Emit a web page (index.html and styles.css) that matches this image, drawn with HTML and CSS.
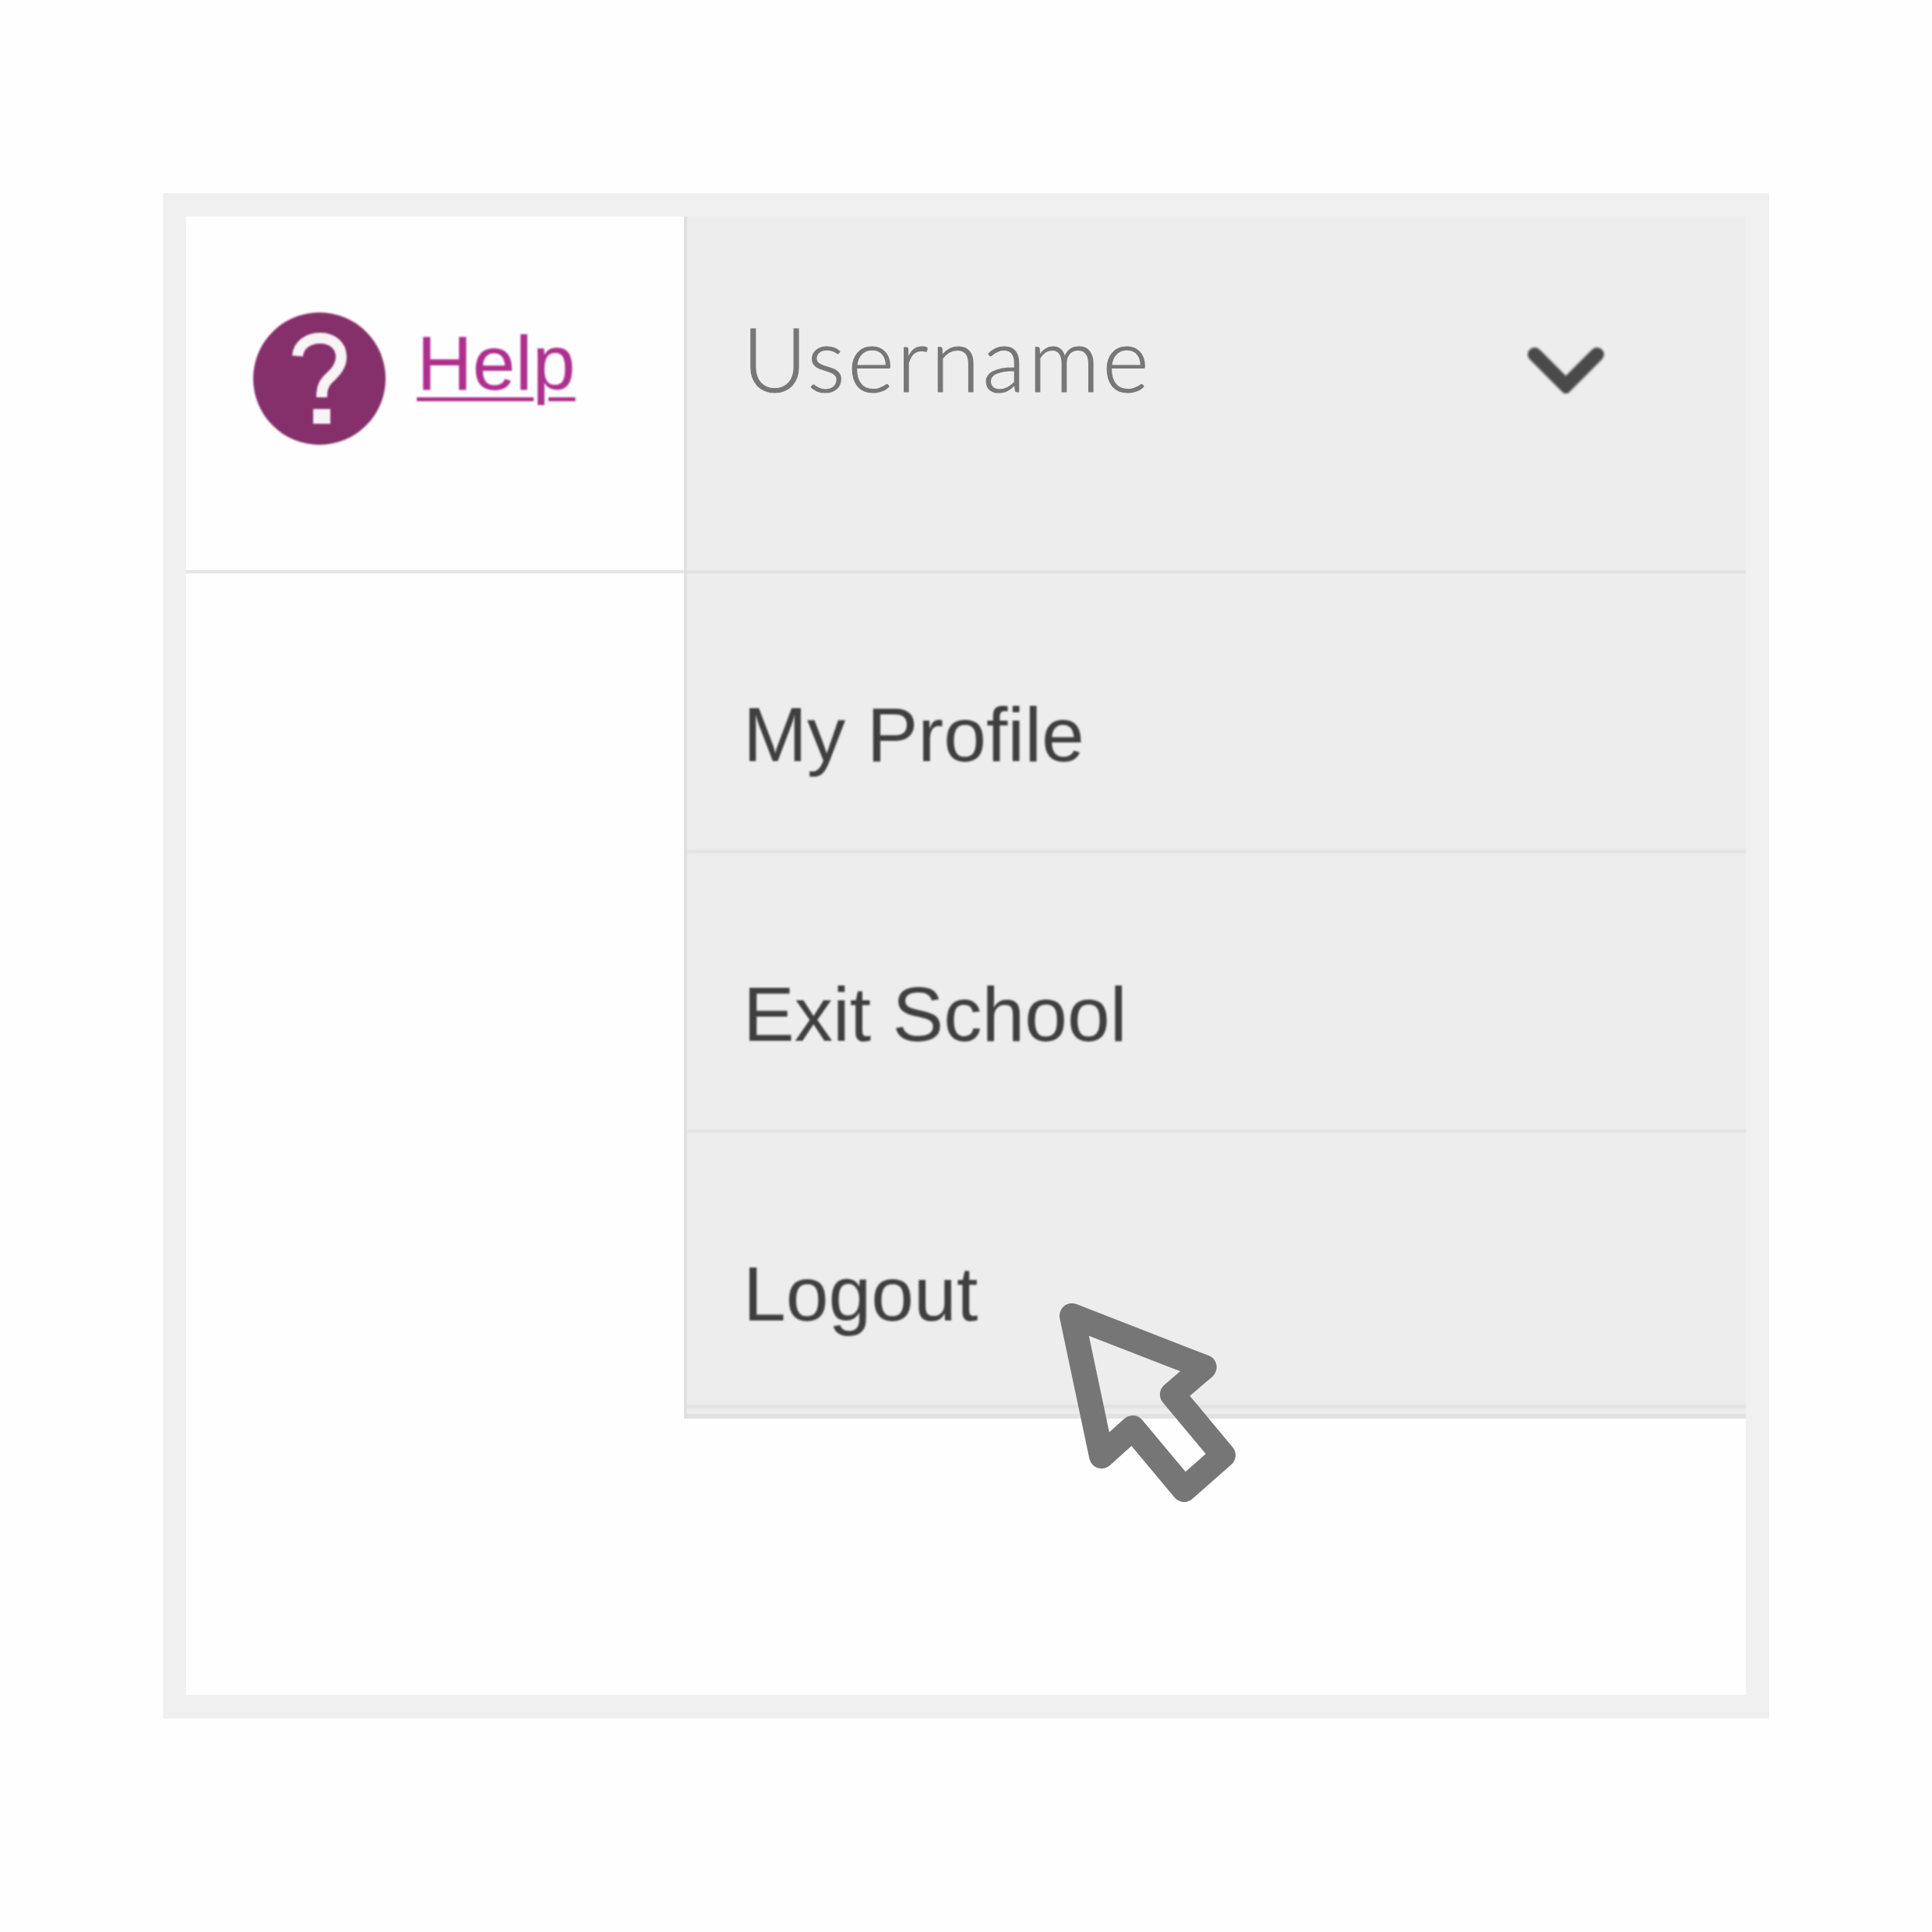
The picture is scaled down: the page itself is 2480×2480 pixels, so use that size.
FILE: index.html
```html
<!DOCTYPE html>
<html lang="en">
<head>
<meta charset="utf-8">
<title>Logout</title>
<link rel="stylesheet" href="styles.css">
</head>
<body>
<div class="frame">
  <div class="left">
    <div class="help-row">
      <svg class="help-icon" viewBox="0 0 174 174" aria-hidden="true">
        <circle cx="87" cy="87" r="85" fill="#85306a"/>
        <path d="M59 58c1-14 13-23 29-23 16 0 27 10 27 24 0 11-6 18-13 25-8 7-12 13-12 27" fill="none" stroke="#f8f4f6" stroke-width="14"/>
        <rect x="79" y="126" width="22" height="19" fill="#f8f4f6"/>
      </svg>
      <a class="help-link" href="#">Help</a>
    </div>
  </div>
  <div class="right">
    <div class="user-row">
      <span class="username">Username</span>
      <svg class="chevron" viewBox="0 0 100 60" aria-hidden="true">
        <path d="M10 10 50 50 90 10" fill="none" stroke="#4a4a4a" stroke-width="18" stroke-linecap="round" stroke-linejoin="miter"/>
      </svg>
    </div>
    <ul class="menu">
      <li class="menu-item">My Profile</li>
      <li class="menu-item">Exit School</li>
      <li class="menu-item last">Logout</li>
    </ul>
  </div>
  <svg class="cursor" viewBox="0 0 300 300" aria-hidden="true">
    <path d="M36 39 205.7 105 165 140 230 218 180 262 114 183 74 219Z" fill="none" stroke="#767676" stroke-width="32" stroke-linejoin="round"/>
  </svg>
</div>
</body>
</html>
```
FILE: styles.css
```css
* { box-sizing: border-box; }
html, body { margin: 0; padding: 0; background: #fefefe; }
body { width: 2480px; height: 2480px; padding: 248px 0 0 209px; }

.frame {
  position: relative;
  display: flex;
  align-items: flex-start;
  width: 2062px;
  height: 1958px;
  border: 30px solid #f0f0f0;
  background: #fefefe;
}

.left { width: 639px; }
.help-row {
  display: flex;
  align-items: flex-start;
  gap: 38px;
  height: 458px;
  padding: 121px 0 0 84px;
  border-bottom: 4px solid #e4e4e4;
}
.help-icon { width: 174px; height: 174px; flex: none; filter: blur(1px); }
.help-link {
  margin-top: 17px;
  font: 99px/1 "Liberation Sans", Arial, sans-serif;
  color: #ae2f8e;
  text-decoration: underline;
  text-decoration-thickness: 5px;
  text-underline-offset: 10px;
  filter: blur(0.8px);
}

.right {
  flex: 1;
  background: #ededed;
  border-left: 4px solid #e0e0e0;
}
.user-row {
  display: flex;
  justify-content: space-between;
  align-items: flex-start;
  height: 458px;
  padding: 124px 181px 0 71px;
  border-bottom: 4px solid #e2e2e2;
}
.username {
  font: 300 114px/1 Lato, sans-serif;
  color: #777;
  letter-spacing: 3.5px;
  -webkit-text-stroke: 1.2px #777;
  filter: blur(0.4px);
}
.chevron { width: 100px; height: 60px; margin-top: 43px; filter: blur(1.5px); }

.menu {
  list-style: none;
  margin: 0;
  padding: 0 0 7px;
  border-bottom: 6px solid #e2e2e2;
}
.menu-item {
  height: 359px;
  padding: 158px 0 0 72px;
  border-bottom: 4px solid #e2e2e2;
  font: 98.5px/1 "Liberation Sans", Arial, sans-serif;
  color: #3f3f3f;
  filter: blur(0.8px);
}
.menu-item.last { height: 354px; border-bottom-width: 5px; }

.cursor {
  position: absolute;
  left: 1101px;
  top: 1372px;
  width: 300px;
  height: 300px;
}
```
